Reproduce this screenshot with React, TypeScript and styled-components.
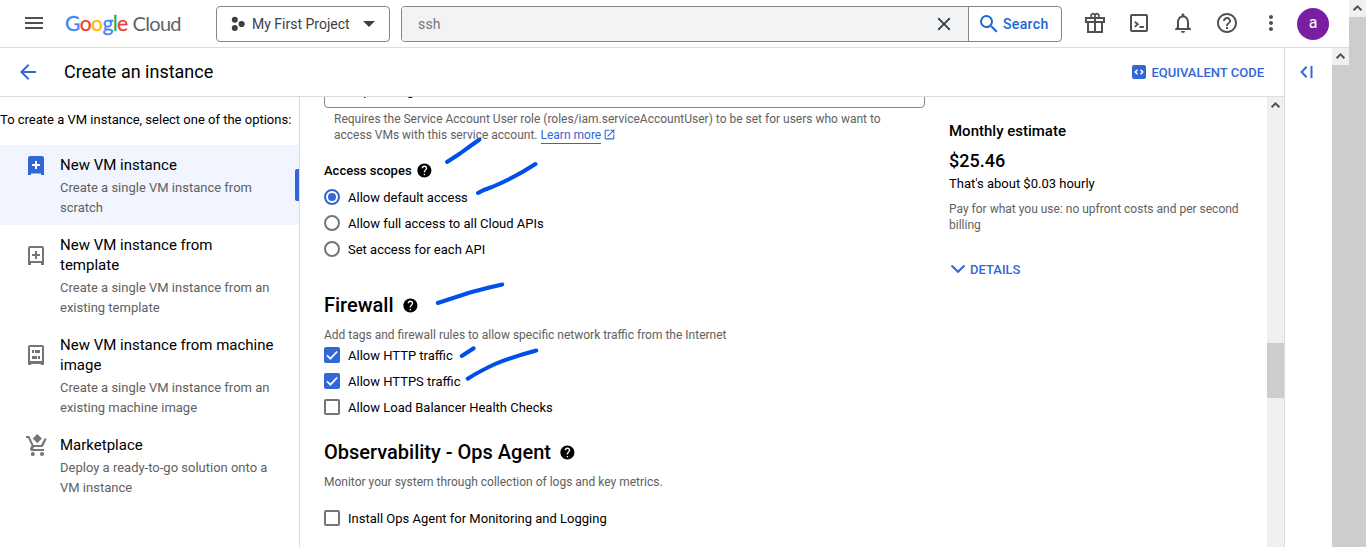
import React from "react";
import styled, { createGlobalStyle } from "styled-components";
import {
  MdArrowBack,
  MdClose,
  MdHelp,
  MdHelpOutline,
  MdMenu,
  MdMoreVert,
  MdNotificationsNone,
  MdOpenInNew,
  MdSearch,
} from "react-icons/md";

const BLUE = "#3367d6";
const LINE = "#dadce0";
const GREY = "#616161";

const GlobalStyle = createGlobalStyle`
  * { box-sizing: border-box; }
  body {
    margin: 0;
    overflow: hidden;
    background: #fff;
    color: #000;
    font-family: Roboto, "Liberation Sans", sans-serif;
    font-size: 13px;
  }
  svg { display: block; flex: none; }
`;

const Page = styled.div`
  position: relative;
  display: flex;
  width: 1366px;
  height: 547px;
  overflow: hidden;
`;
const AppColumn = styled.div`
  display: flex;
  flex-direction: column;
  width: 1349px;
`;
const Row = styled.div`
  display: flex;
  flex: 1;
  min-height: 0;
`;

/* Scrollbars */
const Track = styled.div`
  display: flex;
  flex-direction: column;
  flex: none;
  width: 17px;
  background: #f0f0f0;
`;
const TrackButton = styled.div`
  display: flex;
  align-items: center;
  justify-content: center;
  height: 17px;
`;
const Thumb = styled.div<{ $top?: number; $height?: number }>`
  margin-top: ${(p) => p.$top ?? 0}px;
  background: #cdcdcd;
  ${(p) => (p.$height ? `height: ${p.$height}px;` : "flex: 1;")}
`;
const Scrollbar = ({ top, height }: { top?: number; height?: number }) => (
  <Track>
    <TrackButton>
      <svg width="17" height="17" viewBox="0 0 17 17">
        <path d="M4.6 10.2L8.5 6.3l3.9 3.9" fill="none" stroke="#505050" strokeWidth="2" />
      </svg>
    </TrackButton>
    <Thumb $top={top} $height={height} />
  </Track>
);

/* Top bar */
const Header = styled.header`
  display: flex;
  align-items: center;
  flex: none;
  height: 48px;
  padding: 0 20px 0 22px;
  border-bottom: 1px solid ${LINE};
  color: #505050;

  > svg {
    margin-bottom: 1px;
  }
`;
const Logo = styled.div`
  display: flex;
  align-items: baseline;
  width: 132px;
  margin: -2px 0 0 19px;
  font-family: Lato, sans-serif;
  font-size: 21px;
  line-height: 24px;
  letter-spacing: -0.6px;
  white-space: nowrap;
  color: #5f6368;
`;
const Tint = styled.span<{ $color: string }>`
  color: ${(p) => p.$color};
  -webkit-text-stroke: 0.3px ${(p) => p.$color};
`;
const CloudWord = styled.span`
  margin-left: 5px;
  font-size: 20px;
  letter-spacing: -0.7px;
`;
const ProjectButton = styled.div`
  display: flex;
  align-items: center;
  width: 174px;
  height: 36px;
  margin-left: 19px;
  padding: 0 14px;
  border: 1px solid #80868b;
  border-radius: 4px;
  color: #3c4043;
  font-size: 14px;
`;
const ProjectName = styled.span`
  flex: 1;
  margin-left: 7px;
  white-space: nowrap;
`;
const SearchBox = styled.div`
  display: flex;
  width: 661px;
  height: 36px;
  margin-left: 11px;
  border: 1px solid #80868b;
  border-radius: 4px;
  overflow: hidden;
`;
const SearchField = styled.div`
  display: flex;
  align-items: center;
  justify-content: space-between;
  width: 567px;
  padding: 0 13px 0 16px;
  border-right: 1px solid #80868b;
  background: #f1f3f4;
  color: #757575;
  font-size: 14px;
  letter-spacing: 0.2px;
`;
const SearchButton = styled.div`
  display: flex;
  align-items: center;
  gap: 2px;
  padding-left: 8px;
  color: #1967d2;
  font-size: 14px;
  font-weight: 500;
  letter-spacing: 0.35px;
`;
const Actions = styled.div`
  display: flex;
  align-items: center;
  gap: 20px;
  margin: 1px 0 0 21px;

  svg {
    margin-bottom: 2px;
  }
`;
const Avatar = styled.div`
  width: 32px;
  height: 32px;
  margin-left: -6px;
  border-radius: 50%;
  background: #7b1fa2;
  color: #fff;
  font-size: 16px;
  line-height: 30px;
  text-align: center;
`;

/* Title bar */
const Workspace = styled.div`
  display: flex;
  flex-direction: column;
  width: 1285px;
  border-right: 1px solid ${LINE};
`;
const TitleBar = styled.div`
  display: flex;
  align-items: center;
  flex: none;
  height: 49px;
  padding: 0 20px 0 16px;
  border-bottom: 1px solid ${LINE};
  color: ${BLUE};
`;
const PageTitle = styled.h1`
  flex: 1;
  margin: 0 0 0 24px;
  padding-bottom: 2px;
  color: #000;
  font-size: 18px;
  font-weight: 400;
`;
const TextButton = styled.div<{ $gap: number }>`
  display: flex;
  align-items: center;
  gap: ${(p) => p.$gap}px;
  color: ${BLUE};
  font-size: 13px;
  font-weight: 500;
`;
const Rail = styled.div`
  flex: 1;
  padding: 16px 0 0 14px;
`;

/* Options sidebar */
const Sidebar = styled.nav`
  flex: none;
  width: 300px;
  border-right: 1px solid ${LINE};
`;
const SidebarIntro = styled.p`
  height: 48px;
  margin: 0;
  padding-top: 15px;
  line-height: 16px;
  white-space: nowrap;
`;
const Option = styled.div<{ $active?: boolean }>`
  display: flex;
  flex-direction: column;
  position: relative;
  padding: 10px 25px 7px 24px;
  background: ${(p) => (p.$active ? "#f0f5ff" : "transparent")};
`;
const OptionHead = styled.div`
  display: flex;
  align-items: center;
  gap: 12px;
  color: #757575;

  svg {
    margin: -2px 0;
  }
`;
const OptionTitle = styled.div`
  color: #000;
  font-size: 15px;
  line-height: 20px;
`;
const OptionText = styled.div`
  margin: 3px 0 0 36px;
  color: ${GREY};
  font-size: 13px;
  line-height: 20px;
`;
const ActiveBar = styled.div`
  position: absolute;
  top: 24px;
  right: 0;
  width: 4px;
  height: 32px;
  border-radius: 2px 0 0 2px;
  background: ${BLUE};
`;

/* Form */
const Scroller = styled.main`
  display: flex;
  flex: 1;
  min-width: 0;
  overflow: hidden;
`;
const Form = styled.div`
  width: 625px;
  padding-left: 24px;
`;
const Field = styled.div`
  height: 40px;
  margin-top: -29px;
  padding: 12px 11px 0;
  border: 1px solid #80868b;
  border-radius: 4px;
  line-height: 20px;
`;
const Hint = styled.p`
  width: 580px;
  margin: 3px 0 0 10px;
  color: ${GREY};
  font-size: 12px;
  line-height: 16px;
`;
const Link = styled.span`
  padding-bottom: 1px;
  border-bottom: 1px solid ${BLUE};
  color: ${BLUE};
`;
const LinkIcon = styled.span`
  display: inline-block;
  margin-left: 2px;
  color: ${BLUE};
  vertical-align: -2px;
`;
const Heading = styled.h2<{ $small?: boolean; $top: number }>`
  display: flex;
  align-items: center;
  gap: ${(p) => (p.$small ? 4 : 8)}px;
  height: 24px;
  margin: ${(p) => p.$top}px 0 ${(p) => (p.$small ? 2 : 0)}px;
  font-size: ${(p) => (p.$small ? 13 : 20)}px;
  font-weight: 500;
`;
const Note = styled.p<{ $bottom: number }>`
  margin: 10px 0 ${(p) => p.$bottom}px;
  color: ${GREY};
  font-size: 12px;
  line-height: 16px;
`;
const Choice = styled.div`
  display: flex;
  align-items: center;
  gap: 8px;
  height: 26px;
`;
const Radio = styled.span<{ $on?: boolean }>`
  width: 16px;
  height: 16px;
  padding: 2px;
  border: 2px solid ${(p) => (p.$on ? BLUE : "#757575")};
  border-radius: 50%;
  background: #fff;

  &::before {
    content: "";
    display: block;
    width: 8px;
    height: 8px;
    border-radius: 50%;
    background: ${(p) => (p.$on ? BLUE : "#fff")};
  }
`;
const Box = styled.span<{ $on?: boolean }>`
  display: flex;
  width: 16px;
  height: 16px;
  border: ${(p) => (p.$on ? "0" : "2px solid #757575")};
  border-radius: 2px;
  background: ${(p) => (p.$on ? BLUE : "#fff")};
`;

/* Price summary */
const Estimate = styled.aside`
  width: 318px;
  padding: 24px 24px 0;
`;
const EstimateTitle = styled.h3`
  margin: 0;
  font-size: 15px;
  font-weight: 500;
  line-height: 20px;
`;
const Price = styled.div`
  margin-top: 8px;
  font-size: 18px;
  font-weight: 500;
  line-height: 24px;
`;
const Hourly = styled.div`
  margin-top: 2px;
  line-height: 18px;
`;
const Terms = styled.p`
  width: 295px;
  margin: 8px 0 28px;
  color: ${GREY};
  font-size: 12px;
  line-height: 16px;
`;

const PenMarks = styled.svg`
  position: absolute;
  top: 0;
  left: 0;
  pointer-events: none;
`;

const ProjectIcon = () => (
  <svg width="14" height="16" viewBox="0 0 14 16" fill="#3c4043">
    <circle cx="3.8" cy="3.8" r="3" />
    <circle cx="10.6" cy="8" r="3.1" />
    <circle cx="3.8" cy="12" r="3" />
  </svg>
);
const GiftIcon = () => (
  <svg width="24" height="24" viewBox="0 0 24 24" fill="none" stroke="#505050" strokeWidth="2">
    <path d="M3 7h18v4H3zM5 11v10h14V11M12 6v15" />
    <path d="M12 6V4a2 2 0 1 0-3.400 2M12 6V4a2 2 0 1 1 3.400 2" strokeWidth="1.800" />
  </svg>
);
const ShellIcon = () => (
  <svg width="24" height="24" viewBox="0 0 24 24" fill="none" stroke="#505050" strokeWidth="2">
    <rect x="4" y="4" width="16" height="16" rx="1" />
    <path d="M7.8 10.8l3 2.500-3 2.500M12.500 16h4.400" strokeWidth="1.8" />
  </svg>
);
const CodeIcon = () => (
  <svg width="14" height="14" viewBox="0 0 14 14">
    <rect width="14" height="14" rx="2" fill={BLUE} />
    <path d="M5.5 4.7L3.2 7l2.3 2.3M8.5 4.7L10.8 7 8.5 9.3" fill="none" stroke="#fff" strokeWidth="1.5" />
  </svg>
);
const CollapseIcon = () => (
  <svg width="16" height="16" viewBox="0 0 16 16" fill="none" stroke={BLUE} strokeWidth="2">
    <path d="M7.6 2.8L2.6 8l5 5.2M12.5 2v12" />
  </svg>
);
const VmIcon = ({ filled }: { filled?: boolean }) => (
  <svg width="24" height="24" viewBox="0 0 24 24">
    {filled ? (
      <path d="M6 3h12a2 2 0 0 1 2 2v17h-3v-1.500H7V22H4V5a2 2 0 0 1 2-2z" fill={BLUE} />
    ) : (
      <path
        fillRule="evenodd"
        d="M6 3h12a2 2 0 0 1 2 2v17h-3v-2H7v2H4V5a2 2 0 0 1 2-2zM6 5v13h12V5z"
        fill="#757575"
      />
    )}
    <path d="M12 8v8M8 12h8" stroke={filled ? "#fff" : "#757575"} strokeWidth="2" />
  </svg>
);
const MachineIcon = () => (
  <svg width="24" height="24" viewBox="0 0 24 24" fill="#757575">
    <path fillRule="evenodd" d="M6 2h12a2 2 0 0 1 2 2v17a1 1 0 0 1-1 1h-2v-1H7v1H5a1 1 0 0 1-1-1V4a2 2 0 0 1 2-2zM6 4v14h12V4z" />
    <path d="M8 7h2v3H8zM11 7h5v3h-5zM8 13h5v3H8zM14 13h2v3h-2z" />
  </svg>
);
const MarketIcon = () => (
  <svg width="24" height="24" viewBox="0 0 24 24" fill="#757575">
    <path d="M13.300 1l4.600 4.600-4.600 4.600-4.600-4.600z" />
    <g transform="translate(1 1)">
      <path d="M8.2 14.750l.030-.120.900-1.630h7.400c.750 0 1.410-.410 1.750-1.030l3.400-7.010L19.900 4h-.010l-1.100 2-2.760 5H8.530l-.130-.270L6.160 6l-.950-2-.940-2H1v2h2l3.600 7.590-1.350 2.450c-.160.280-.250.610-.250.960 0 1.100.900 2 2 2h12v-2H8.420c-.130 0-.220-.110-.220-.250z" />
      <circle cx="7.800" cy="20" r="2" />
      <circle cx="17" cy="20" r="2" />
    </g>
  </svg>
);

const Check = ({ on, label }: { on?: boolean; label: string }) => (
  <Choice>
    <Box $on={on}>
      {on && (
        <svg width="16" height="16" viewBox="0 0 16 16">
          <path d="M3 8.300l3.400 3.400L13.200 4.500" fill="none" stroke="#fff" strokeWidth="1.700" />
        </svg>
      )}
    </Box>
    {label}
  </Choice>
);

const options = [
  { icon: <VmIcon filled />, title: "New VM instance", text: "Create a single VM instance from scratch", active: true },
  { icon: <VmIcon />, title: "New VM instance from template", text: "Create a single VM instance from an existing template" },
  { icon: <MachineIcon />, title: "New VM instance from machine image", text: "Create a single VM instance from an existing machine image" },
  { icon: <MarketIcon />, title: "Marketplace", text: "Deploy a ready-to-go solution onto a VM instance" },
];

const logoLetters: [string, string][] = [
  ["G", "#4285f4"],
  ["o", "#ea4335"],
  ["o", "#fbbc04"],
  ["g", "#4285f4"],
  ["l", "#34a853"],
  ["e", "#ea4335"],
];

export default function App() {
  return (
    <Page>
      <GlobalStyle />
      <AppColumn>
        <Header>
          <MdMenu size={24} />
          <Logo>
            {logoLetters.map(([letter, color], i) => (
              <Tint key={i} $color={color}>{letter}</Tint>
            ))}
            <CloudWord>Cloud</CloudWord>
          </Logo>
          <ProjectButton>
            <ProjectIcon />
            <ProjectName>My First Project</ProjectName>
            <svg width="12" height="6" viewBox="0 0 12 6"><path d="M0 0h12L6 6z" fill="#3c4043" /></svg>
          </ProjectButton>
          <SearchBox>
            <SearchField>
              ssh
              <MdClose size={22} color="#3c4043" />
            </SearchField>
            <SearchButton>
              <MdSearch size={24} />
              Search
            </SearchButton>
          </SearchBox>
          <Actions>
            <GiftIcon />
            <ShellIcon />
            <MdNotificationsNone size={24} />
            <MdHelpOutline size={24} />
            <MdMoreVert size={24} />
            <Avatar>a</Avatar>
          </Actions>
        </Header>
        <Row>
          <Workspace>
            <TitleBar>
              <MdArrowBack size={24} />
              <PageTitle>Create an instance</PageTitle>
              <TextButton $gap={5}>
                <CodeIcon />
                EQUIVALENT CODE
              </TextButton>
            </TitleBar>
            <Row>
              <Sidebar>
                <SidebarIntro>To create a VM instance, select one of the options:</SidebarIntro>
                {options.map((o) => (
                  <Option key={o.title} $active={o.active}>
                    <OptionHead>
                      {o.icon}
                      <OptionTitle>{o.title}</OptionTitle>
                    </OptionHead>
                    <OptionText>{o.text}</OptionText>
                    {o.active && <ActiveBar />}
                  </Option>
                ))}
              </Sidebar>
              <Scroller>
                <Form>
                  <Field>Compute Engine default service account</Field>
                  <Hint>
                    Requires the Service Account User role (roles/iam.serviceAccountUser) to be set for users who want to
                    access VMs with this service account. <Link>Learn more</Link>
                    <LinkIcon><MdOpenInNew size={13} /></LinkIcon>
                  </Hint>
                  <Heading $small $top={15}>
                    Access scopes <MdHelp size={16.8} />
                  </Heading>
                  <Choice><Radio $on />Allow default access</Choice>
                  <Choice><Radio />Allow full access to all Cloud APIs</Choice>
                  <Choice><Radio />Set access for each API</Choice>
                  <Heading $top={31}>
                    Firewall <MdHelp size={16.8} />
                  </Heading>
                  <Note $bottom={-1}>Add tags and firewall rules to allow specific network traffic from the Internet</Note>
                  <Check on label="Allow HTTP traffic" />
                  <Check on label="Allow HTTPS traffic" />
                  <Check label="Allow Load Balancer Health Checks" />
                  <Heading $top={20}>
                    Observability - Ops Agent <MdHelp size={16.8} />
                  </Heading>
                  <Note $bottom={15}>Monitor your system through collection of logs and key metrics.</Note>
                  <Check label="Install Ops Agent for Monitoring and Logging" />
                </Form>
                <Estimate>
                  <EstimateTitle>Monthly estimate</EstimateTitle>
                  <Price>$25.46</Price>
                  <Hourly>That's about $0.03 hourly</Hourly>
                  <Terms>Pay for what you use: no upfront costs and per second billing</Terms>
                  <TextButton $gap={5}>
                    <svg width="16" height="16" viewBox="0 0 16 16">
                      <path d="M2.500 4.500L9 10.800l6.500-6.300" fill="none" stroke={BLUE} strokeWidth="2" />
                    </svg>
                    DETAILS
                  </TextButton>
                </Estimate>
              </Scroller>
              <Scrollbar top={229} height={55} />
            </Row>
          </Workspace>
          <Rail><CollapseIcon /></Rail>
          <Scrollbar />
        </Row>
      </AppColumn>
      <Scrollbar />
      <PenMarks width="1366" height="547" viewBox="0 0 1366 547" fill="none" stroke="#004fe8" strokeWidth="4" strokeLinecap="round">
        <path d="M447 162L460 153.500Q471 145.500 479.500 139.500" />
        <path d="M478 193Q484 189.500 492 187Q514 178 535.500 164" />
        <path d="M437.700 303L470 292.500Q486 288 502.300 284.500" />
        <path d="M461.700 356L473.700 348.300" />
        <path d="M467.700 378.700Q480 371 496.700 363.300Q517 355.500 536.300 350.500" />
      </PenMarks>
    </Page>
  );
}
